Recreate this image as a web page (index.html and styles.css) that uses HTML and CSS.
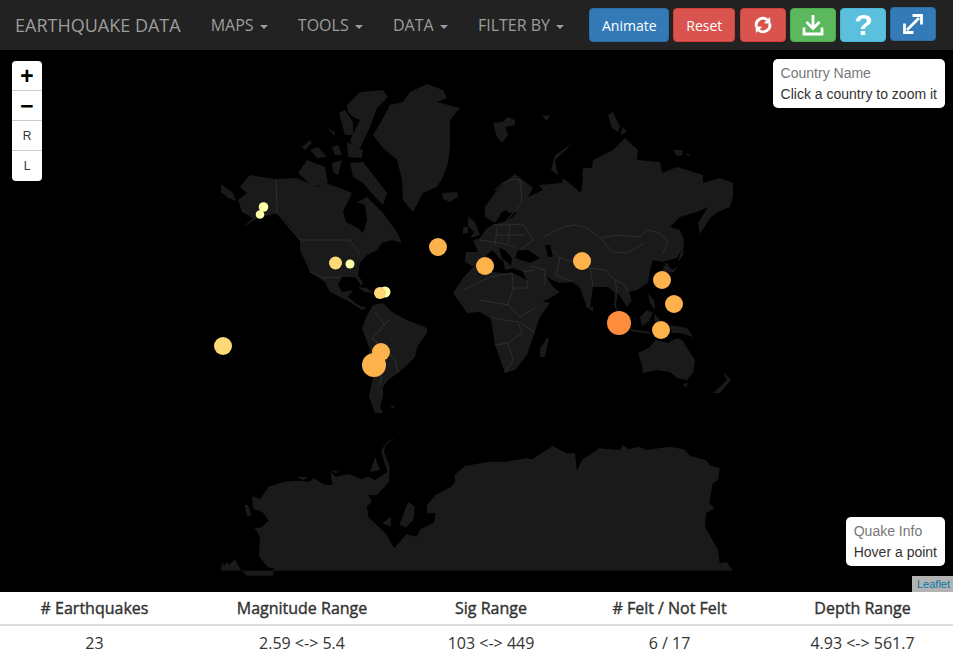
FILE: index.html
```html
<!DOCTYPE html>
<html>
<head>
    <meta charset="UTF-8">
    <meta name="viewport" content="width=device-width, initial-scale=1.0">
    <title>Earthquake Data</title>
    <link rel="stylesheet" href="styles.css">
</head>
<body>
    <nav class="navbar">
        <a class="brand">EARTHQUAKE DATA</a>
        <a class="nav-item">MAPS<span class="caret"></span></a>
        <a class="nav-item">TOOLS<span class="caret"></span></a>
        <a class="nav-item">DATA<span class="caret"></span></a>
        <a class="nav-item">FILTER BY<span class="caret"></span></a>
        <div class="nav-buttons">
            <button class="btn btn-blue btn-animate">Animate</button>
            <button class="btn btn-red btn-reset">Reset</button>
            <button class="btn btn-red btn-icon">
                <svg width="20" height="20" viewBox="0 0 20 20">
                    <path class="icon-line" d="M3.300 11.500A6.800 6.800 0 0 1 14.500 5"/>
                    <path class="icon-fill" d="M17 2 17.500 8.800 10.800 8.200Z"/>
                    <path class="icon-line" d="M16.700 8.500A6.800 6.800 0 0 1 5.500 15"/>
                    <path class="icon-fill" d="M3 18 2.500 11.200 9.200 11.800Z"/>
                </svg>
            </button>
            <button class="btn btn-green btn-icon">
                <svg width="22" height="22" viewBox="0 0 22 22">
                    <path class="icon-line" d="M11 1V13"/>
                    <path class="icon-line" d="M4.500 8 11 14.500 17.500 8"/>
                    <path class="icon-line" d="M2 13.500V20H20V13.500"/>
                </svg>
            </button>
            <button class="btn btn-cyan btn-icon btn-help">?</button>
            <button class="btn btn-blue btn-icon btn-expand">
                <svg width="22" height="22" viewBox="0 0 22 22">
                    <path class="icon-line" d="M5 17 17 5"/>
                    <path class="icon-line" d="M10.500 2.500H19.500V11.500"/>
                    <path class="icon-line" d="M2.500 10.500V19.500H11.500"/>
                </svg>
            </button>
        </div>
    </nav>

    <div class="map">
        <svg class="world" width="953" height="542" viewBox="0 50 953 542">
            <g class="land">
                <!-- north and central america -->
                <polygon points="240,187 250,175 275,179 297,178 317,187 325,183 337,187 352,193 343,212 346,222 358,228 363,233 367,220 365,205 357,202 367,197 383,213 397,232 402,243 392,240 382,243 377,250 367,255 360,263 358,275 363,283 361,286 356,278 353,277 342,277 338,285 342,292 353,290 348,297 358,305 367,308 362,310 350,302 330,292 325,282 310,272 300,250 300,240 290,227 278,213 260,217 243,227 253,218 242,212 238,200 247,193"/>
                <polygon points="221,184 233,193 236,201 228,198 221,192"/>
                <!-- greenland -->
                <polygon points="382,120 390,105 403,102 410,92 427,84 443,90 447,98 437,102 460,108 450,120 450,147 448,163 443,177 437,187 423,193 413,212 403,200 402,180 397,160 383,148 373,135"/>
                <!-- arctic islands -->
                <polygon points="347,105 360,92 383,90 388,97 377,108 370,127 360,148 352,145 350,140 360,120 353,117 348,112"/>
                <polygon points="339,113 345,110 353,122 353,135 345,135"/>
                <polygon points="350,163 363,162 377,180 387,193 383,205 373,195 363,183 353,177"/>
                <polygon points="307,160 325,167 328,183 313,187 298,173"/>
                <polygon points="302,147 310,140 312,143 305,150"/>
                <polygon points="310,150 318,147 327,157 317,158"/>
                <polygon points="327,128 335,132 335,136"/>
                <polygon points="332,147 338,145 342,155 335,155"/>
                <polygon points="332,163 342,160 338,175 333,172"/>
                <polygon points="347,142 363,150 362,158 348,157"/>
                <polygon points="442,193 457,192 458,197 450,202 443,199"/>
                <polygon points="463,227 468,227 468,233 463,234"/>
                <polygon points="468,217 475,222 480,235 470,238 474,232 468,226"/>
                <!-- eurasia -->
                <polygon points="485,207 497,190 505,182 515,174 523,180 533,188 528,197 543,190 539,185 562,183 563,178 575,188 580,192 583,168 592,168 593,160 613,150 625,138 638,150 637,160 660,162 662,173 677,167 703,175 703,183 720,178 733,183 733,197 730,207 718,212 710,218 700,234 698,223 708,207 697,212 680,217 670,227 680,230 683,247 677,258 662,262 653,260 650,270 648,283 637,290 627,292 632,300 627,307 618,293 616,305 620,318 614,305 615,293 608,287 593,287 590,308 587,308 580,288 573,282 560,283 552,280 546,276 553,287 560,292 547,300 538,302 528,283 523,272 513,268 505,270 503,258 511,266 512,258 505,250 499,248 503,262 492,250 486,256 476,268 465,262 466,252 478,252 473,240 480,238 487,228 493,225 508,220 513,217 517,212 508,213 507,210 502,212 495,223 485,217"/>
                <polygon points="493,123 503,122 507,117 515,120 515,125 505,127 508,135 502,143 497,137"/>
                <polygon points="542,116 550,115 547,121"/>
                <polygon points="608,115 613,112 620,127 618,132 612,128"/>
                <polygon points="620,135 623,127 627,132"/>
                <polygon points="573,143 555,160 558,175 551,170 555,155"/>
                <polygon points="673,150 682,150 683,155 677,156"/>
                <polygon points="685,153 691,155 688,156"/>
                <polygon points="680,230 682,248 678,262 683,255 684,240"/>
                <polygon points="666,262 672,270 678,266 674,272 665,273 658,279 662,272"/>
                <!-- africa -->
                <polygon points="473,267 500,273 513,273 527,280 538,300 550,303 540,317 533,337 527,355 515,370 505,373 495,345 492,325 490,318 480,312 467,313 453,293 463,278"/>
                <polygon points="540,348 547,338 549,338 545,357 540,357"/>
                <polygon points="590,307 593,307 593,311 590,310"/>
                <!-- asia islands -->
                <polygon points="640,317 647,310 653,313 648,322 642,326"/>
                <polygon points="630,329 650,332 650,334 630,331"/>
                <polygon points="618,312 632,327 629,329 616,318"/>
                <polygon points="648,294 654,300 655,310 650,303"/>
                <polygon points="654,313 660,320 658,328 655,322"/>
                <polygon points="670,325 687,328 693,337 680,333 672,333"/>
                <!-- australia -->
                <polygon points="638,353 650,347 655,340 668,343 677,338 682,340 695,360 693,373 687,380 677,378 670,372 657,370 643,373 642,365"/>
                <polygon points="683,384 688,383 686,388"/>
                <polygon points="713,393 720,393 731,380 723,372 727,380"/>
                <!-- south america -->
                <polygon points="373,305 383,303 392,312 407,320 427,328 427,333 417,347 415,357 407,365 398,373 388,380 383,387 383,397 380,407 383,413 375,413 369,397 373,377 367,360 370,350 362,328 365,320 370,310"/>
                <polygon points="390,407 395,405 393,408"/>
                <polygon points="357,287 367,288 373,293 365,292"/>
                <!-- antarctica, traced larger and scaled down -->
                <g transform="translate(210,430) scale(0.3444,0.3333)">
                    <polygon points="32,422 35,395 42,408 50,395 55,405 72,388 90,420 107,437 183,437 186,415 168,412 142,378 145,320 130,295 150,292 170,272 155,248 125,235 122,198 145,208 170,170 215,155 250,152 290,155 300,145 335,165 355,165 350,125 365,140 405,132 440,148 460,140 480,150 515,125 500,75 497,60 515,35 538,22 510,45 505,65 522,110 520,155 485,195 460,195 470,215 455,230 460,262 510,310 535,355 570,313 600,320 610,298 650,278 655,250 630,250 630,225 655,195 700,170 712,155 710,135 740,108 810,95 860,95 920,85 935,88 995,48 1035,70 1060,70 1065,122 1080,90 1130,55 1190,60 1200,45 1215,58 1245,50 1265,60 1335,50 1375,58 1395,78 1440,90 1450,105 1480,115 1475,150 1460,160 1450,220 1465,235 1440,250 1437,290 1475,360 1480,400 1500,395 1518,422"/>
                    <polygon points="100,225 110,225 120,255 108,258"/>
                    <polygon points="250,140 285,142 270,150"/>
                    <polygon points="350,120 375,125 365,130"/>
                    <polygon points="465,125 480,80 490,110 495,120"/>
                    <polygon points="500,280 525,260 525,290"/>
                    <polygon points="550,285 575,215 595,230 590,270 570,292"/>
                </g>
            </g>
            <g class="sea">
                <polygon points="515,258 518,250 528,250 540,258 530,263"/>
                <polygon points="545,245 550,245 553,257 548,257"/>
                <polygon points="580,167 583,178 581,192 578,190"/>
            </g>
            <g class="borders">
                <path d="M276,179 277,213 300,240 350,240 360,255"/>
                <path d="M310,272 325,278 342,277"/>
                <path d="M375,312 385,325 372,338 380,345 395,360 398,373"/>
                <path d="M390,320 380,327 M372,338 385,350 380,385"/>
                <path d="M463,290 490,277 512,273 513,288 527,288 528,280"/>
                <path d="M513,288 508,305 480,300 M508,305 520,317 535,308 M492,318 518,322 522,333 508,343 495,345 M508,343 513,360 505,372 M520,322 535,333"/>
                <path d="M495,190 503,183 513,179 520,180 522,203 507,220"/>
                <path d="M493,225 503,225 523,224 533,240 520,250 M495,235 525,235 M480,240 500,243 515,247 M497,228 495,245 M510,225 508,243"/>
                <path d="M543,237 563,227 575,225 587,228 600,238 617,235 640,237 647,230 660,233 668,242 663,253 M600,238 613,252 627,253 645,243"/>
                <path d="M553,250 560,258 573,262 590,268 605,270 M560,258 556,275 573,282 M590,268 593,287 M605,270 615,280 625,285 M615,280 617,292 M625,285 630,297"/>
                <path d="M530,266 545,270 545,285 M523,272 535,270"/>
            </g>
            <g class="quakes">
                <circle class="mag-1" cx="263.500" cy="207" r="4.800"/>
                <circle class="mag-1" cx="260" cy="214.500" r="4.300"/>
                <circle class="mag-1" cx="350" cy="264" r="4.500"/>
                <circle class="mag-1" cx="385" cy="292" r="5.500"/>
                <circle class="mag-2" cx="380" cy="293" r="6"/>
                <circle class="mag-2" cx="335.500" cy="263" r="6.500"/>
                <circle class="mag-2" cx="223" cy="346" r="9"/>
                <circle class="mag-3" cx="438" cy="247" r="9"/>
                <circle class="mag-3" cx="485" cy="266" r="9"/>
                <circle class="mag-3" cx="582" cy="261" r="9"/>
                <circle class="mag-3" cx="662" cy="280" r="9"/>
                <circle class="mag-3" cx="674" cy="304" r="9"/>
                <circle class="mag-3" cx="661" cy="330" r="9"/>
                <circle class="mag-3" cx="381" cy="352" r="9"/>
                <circle class="mag-3" cx="374" cy="365" r="12"/>
                <circle class="mag-4" cx="619" cy="323" r="12"/>
            </g>
        </svg>

        <div class="zoom-control">
            <a class="zoom-btn zoom-sign">+</a>
            <a class="zoom-btn zoom-sign">&minus;</a>
            <a class="zoom-btn">R</a>
            <a class="zoom-btn">L</a>
        </div>

        <div class="info info-country">
            <h4>Country Name</h4>
            <p>Click a country to zoom it</p>
        </div>
        <div class="info info-quake">
            <h4>Quake Info</h4>
            <p>Hover a point</p>
        </div>
        <div class="attribution"><a>Leaflet</a></div>
    </div>

    <table class="stats">
        <thead>
            <tr>
                <th># Earthquakes</th>
                <th>Magnitude Range</th>
                <th>Sig Range</th>
                <th># Felt / Not Felt</th>
                <th>Depth Range</th>
            </tr>
        </thead>
        <tbody>
            <tr>
                <td>23</td>
                <td>2.59 &lt;-&gt; 5.4</td>
                <td>103 &lt;-&gt; 449</td>
                <td>6 / 17</td>
                <td>4.93 &lt;-&gt; 561.7</td>
            </tr>
        </tbody>
    </table>
</body>
</html>
```

FILE: styles.css
```css
html, body {
    margin: 0;
    height: 668px;
    overflow: hidden;
    background-color: #fff;
    font-family: "Open Sans", sans-serif;
}
.navbar {
    display: flex;
    align-items: center;
    height: 50px;
    background-color: #222;
    color: #9d9d9d;
}
.brand {
    padding: 0 15px;
    font-size: 18px;
}
.nav-item {
    padding: 0 15px;
    font-size: 16px;
}
.caret {
    display: inline-block;
    margin-left: 6.300px;
    vertical-align: middle;
    border-top: 4px solid #9d9d9d;
    border-left: 4px solid transparent;
    border-right: 4px solid transparent;
}
.nav-buttons {
    display: flex;
    align-items: flex-start;
    gap: 4px;
    margin-left: 10px;
}
.btn {
    display: flex;
    align-items: center;
    justify-content: center;
    height: 34px;
    padding: 0;
    color: #fff;
    font-family: "Open Sans", sans-serif;
    font-size: 14px;
    border: 1px solid transparent;
    border-radius: 4px;
}
.btn-blue {
    background-color: #337ab7;
    border-color: #2e6da4;
}
.btn-red {
    background-color: #d9534f;
    border-color: #d43f3a;
}
.btn-green {
    background-color: #5cb85c;
    border-color: #4cae4c;
}
.btn-cyan {
    background-color: #5bc0de;
    border-color: #46b8da;
}
.btn-animate {
    width: 80px;
}
.btn-reset {
    width: 62px;
    margin-right: 1px;
}
.btn-icon {
    width: 46px;
}
.btn-help {
    font-family: "Liberation Sans", sans-serif;
    font-size: 30px;
    font-weight: bold;
}
.btn-expand {
    margin-top: -1px;
}
.icon-line {
    fill: none;
    stroke: #fff;
    stroke-width: 2.800;
}
.icon-fill {
    fill: #fff;
}
.map {
    position: relative;
    height: 542px;
    background-color: #000;
}
.world {
    display: block;
}
.land polygon {
    fill: #1a1a1a;
}
.sea polygon {
    fill: #000;
}
.borders path {
    fill: none;
    stroke: #2e2e2e;
    stroke-width: 1;
}
.mag-1 {
    fill: #ffffa8;
}
.mag-2 {
    fill: #fed976;
}
.mag-3 {
    fill: #feb24c;
}
.mag-4 {
    fill: #fd8d3c;
}
.zoom-control {
    position: absolute;
    top: 11px;
    left: 12px;
    width: 30px;
    background-color: #fff;
    border-radius: 4px;
    overflow: hidden;
}
.zoom-btn {
    display: block;
    height: 29px;
    line-height: 30px;
    text-align: center;
    color: #333;
    font-family: "Liberation Sans", sans-serif;
    font-size: 12px;
    border-bottom: 1px solid #ccc;
}
.zoom-btn:last-child {
    border-bottom: none;
    height: 30px;
}
.zoom-sign {
    color: #000;
    font-family: "Liberation Mono", monospace;
    font-size: 23px;
    font-weight: bold;
    line-height: 35px;
}
.info {
    position: absolute;
    right: 8px;
    padding: 4px 8px;
    background-color: #fff;
    border-radius: 5px;
    color: #333;
    font-family: "Liberation Sans", sans-serif;
    font-size: 14px;
    line-height: 20px;
}
.info h4 {
    margin: 0 0 1px;
    color: #777;
    font-size: 14px;
    font-weight: normal;
}
.info p {
    margin: 0;
}
.info-country {
    top: 9px;
}
.info-quake {
    bottom: 26px;
}
.attribution {
    position: absolute;
    right: 0;
    bottom: 0;
    padding: 0 3px 0 5px;
    background-color: rgba(255, 255, 255, 0.7);
    color: #0078a8;
    font-family: "Liberation Sans", sans-serif;
    font-size: 11px;
    line-height: 16px;
}
.stats {
    width: 953px;
    table-layout: fixed;
    border-collapse: collapse;
    color: #333;
    font-size: 16px;
    text-align: center;
}
.stats th {
    height: 32px;
    padding: 0;
    font-weight: 400;
    -webkit-text-stroke: 0.4px #333;
    border-bottom: 2px solid #ddd;
}
.stats td {
    height: 33px;
    padding: 0;
}
.stats th:nth-child(1) {
    width: 189px;
}
.stats th:nth-child(2) {
    width: 226px;
}
.stats th:nth-child(3) {
    width: 152px;
}
.stats th:nth-child(4) {
    width: 205px;
}
```
